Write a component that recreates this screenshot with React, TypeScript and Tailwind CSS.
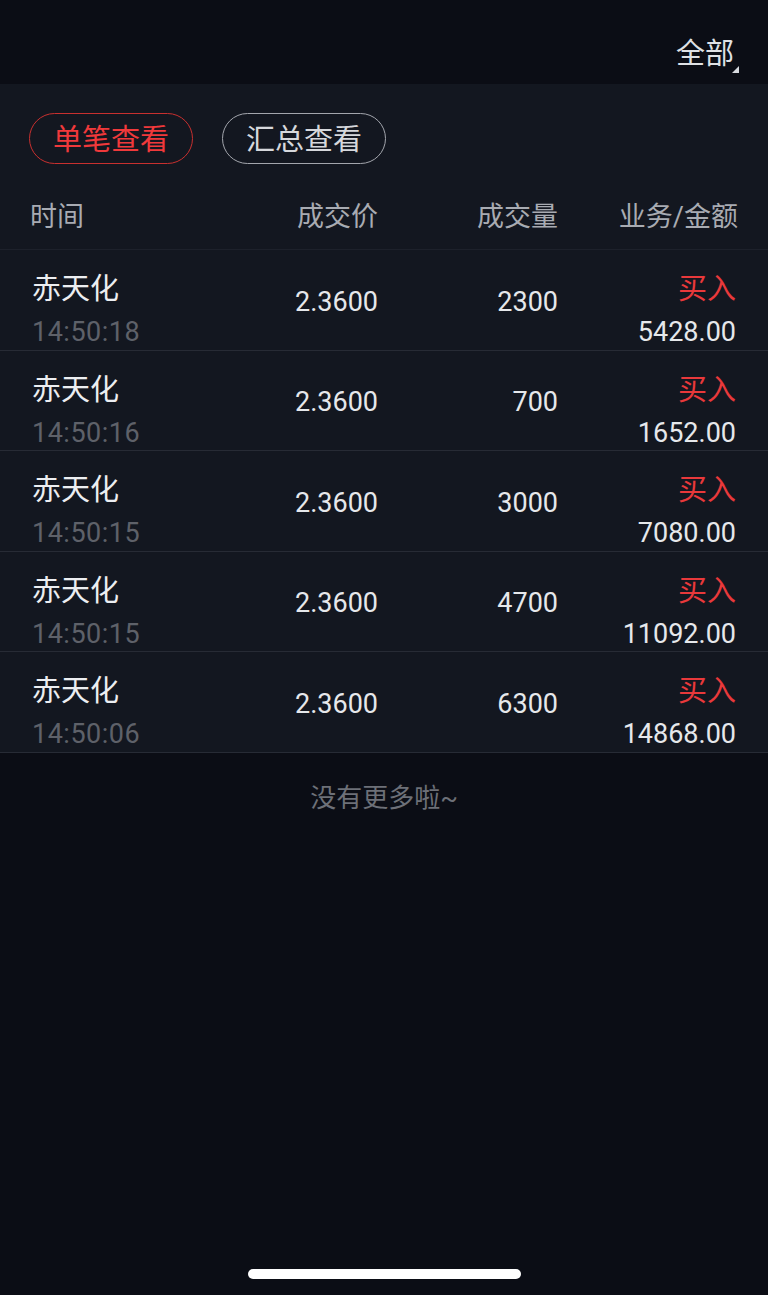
import React from "react";

const rows = [
  { time: "14:50:18", price: "2.3600", vol: "2300", amt: "5428.00" },
  { time: "14:50:16", price: "2.3600", vol: "700", amt: "1652.00" },
  { time: "14:50:15", price: "2.3600", vol: "3000", amt: "7080.00" },
  { time: "14:50:15", price: "2.3600", vol: "4700", amt: "11092.00" },
  { time: "14:50:06", price: "2.3600", vol: "6300", amt: "14868.00" },
];

export default function App() {
  return (
    <div
      className="w-full min-h-[1295px] bg-[#0b0d15] flex flex-col"
      style={{ fontFamily: 'Roboto, "Noto Sans CJK SC", sans-serif' }}
    >
      {/* top bar */}
      <div className="h-[84px] flex justify-end items-start pt-[38px] pr-[34px]">
        <div className="relative text-[29px] leading-[32px] text-[#dfe1e5]">
          全部
          <svg
            className="absolute right-[-5px] bottom-[-3px]"
            width="7"
            height="7"
            viewBox="0 0 7 7"
          >
            <polygon points="7,0 7,7 0,7" fill="#d8dadf" />
          </svg>
        </div>
      </div>

      {/* panel */}
      <div className="bg-[#131720]">
        <div className="flex gap-[29px] pl-[29px] pt-[29px]">
          <div className="w-[164px] h-[51px] pt-[4px] rounded-full border border-[#c8302f] flex items-center justify-center text-[29px] text-[#f0393b]">
            单笔查看
          </div>
          <div className="w-[164px] h-[51px] pt-[4px] rounded-full border border-[#a3a6ad] flex items-center justify-center text-[29px] text-[#d6d8dc]">
            汇总查看
          </div>
        </div>

        <div className="mt-[18px] h-[68px] pt-[4px] flex items-center px-[30px] text-[27px] text-[#a8abb2] border-b border-[#1d212b]">
          <div className="flex-1">时间</div>
          <div className="w-[160px] text-right">成交价</div>
          <div className="w-[180px] text-right">成交量</div>
          <div className="w-[180px] text-right">业务/金额</div>
        </div>

        {rows.map((r, i) => (
          <div
            key={i}
            className="h-[100.6px] flex pl-[32px] pr-[32px] border-b border-[#272b35]"
          >
            <div className="flex-1 flex flex-col pt-[21px]">
              <div className="text-[29px] leading-[36px] text-[#eceef1]">赤天化</div>
              <div className="mt-[7px] text-[27px] leading-[36px] tracking-[0.5px] text-[#5e6169]">{r.time}</div>
            </div>
            <div className="w-[158px] flex items-center justify-end pt-[4px] text-[27px] text-[#e6e8eb]">
              {r.price}
            </div>
            <div className="w-[180px] flex items-center justify-end pt-[4px] text-[27px] text-[#e6e8eb]">
              {r.vol}
            </div>
            <div className="w-[178px] flex flex-col items-end pt-[21px]">
              <div className="text-[29px] leading-[36px] text-[#e9393b]">买入</div>
              <div className="mt-[7px] text-[27px] leading-[36px] text-[#e6e8eb]">{r.amt}</div>
            </div>
          </div>
        ))}
      </div>

      <div className="pt-[29px] text-center text-[26px] leading-[32px] text-[#6d7078]">没有更多啦~</div>

      <div className="flex-1" />
      <div className="flex justify-center mb-[16px]">
        <div className="w-[273px] h-[10px] rounded-full bg-white" />
      </div>
    </div>
  );
}
